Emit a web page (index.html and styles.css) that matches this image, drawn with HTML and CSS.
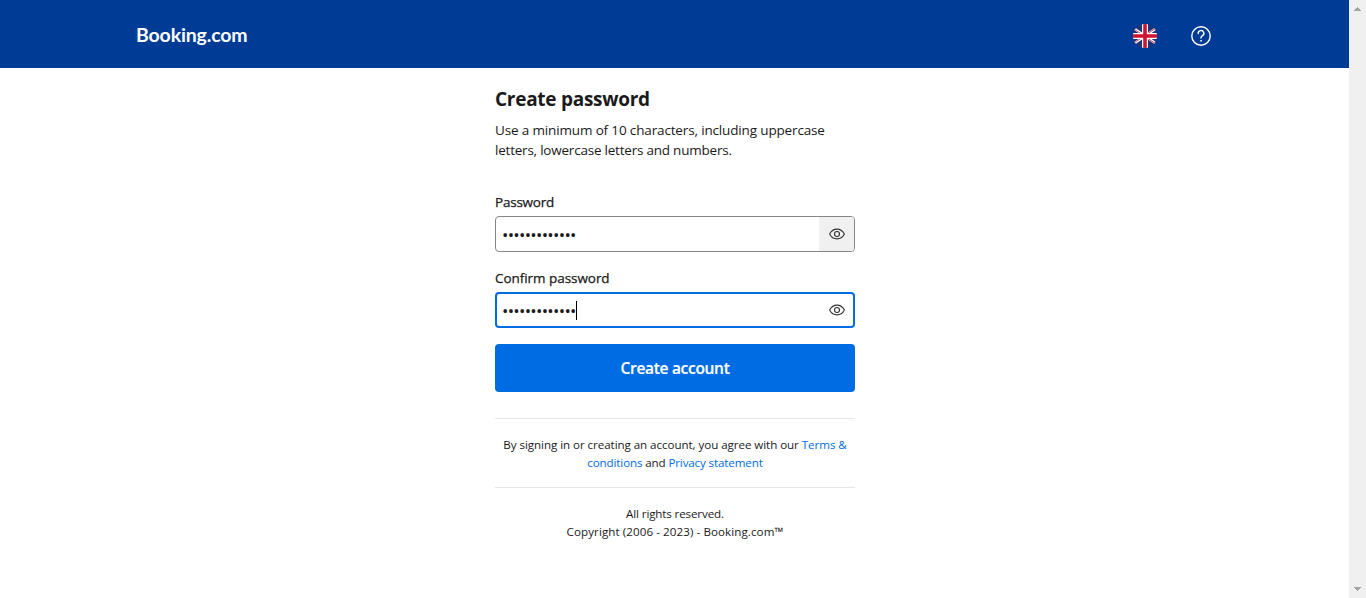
FILE: index.html
```html
<!DOCTYPE html>
<html lang="en">
<head>
<meta charset="utf-8">
<title>Create password</title>
<link rel="stylesheet" href="styles.css">
</head>
<body>
<div class="window">
  <div class="page">
    <header class="header">
      <a class="logo"><span class="logo-text">Booking.com</span></a>
      <div class="header-actions">
        <svg class="flag" width="24" height="24" viewBox="0 0 24 24">
          <clipPath id="disc"><circle cx="12" cy="12" r="12"/></clipPath>
          <g clip-path="url(#disc)">
            <path fill="#1d3478" d="M0 0h24v24H0z"/>
            <path stroke="#fff" stroke-width="2.500" d="M-2 2.500l28 19M26 2.500L-2 21.500"/>
            <path stroke="#d0132f" stroke-width=".8" d="M-2 3l28 19M26 2L-2 21"/>
            <path stroke="#fff" stroke-width="6" d="M12 0v24M0 12h24"/>
            <path stroke="#d0132f" stroke-width="3.6" d="M12 0v24M0 12h24"/>
          </g>
        </svg>
        <svg class="help" width="20" height="20" viewBox="0 0 20 20" fill="none" stroke="#fff" stroke-width="1.4" stroke-linecap="round">
          <circle cx="10" cy="10" r="9.2"/>
          <path d="M7.200 7.500a2.800 2.800 0 1 1 4.300 2.200c-.9.600-1.500 1-1.500 2v.4"/>
          <circle cx="10" cy="14.800" r=".5" fill="#fff" stroke-width=".8"/>
        </svg>
      </div>
    </header>
    <main class="panel">
      <h1 class="title"><span class="title-text">Create password</span></h1>
      <p class="intro"><span class="intro-a">Use a minimum of 10 characters, including uppercase</span><br><span class="intro-b">letters, lowercase letters and numbers.</span></p>
      <div class="label"><span class="label-a">Password</span></div>
      <div class="field">
        <span class="dots">•••••••••••••</span>
        <span class="reveal reveal-gray">
          <svg width="16" height="12" viewBox="0 0 16 12" fill="none" stroke="#333" stroke-width="1.1"><path d="M.6 6C2.2 3 4.9 1.1 8 1.1S13.800 3 15.400 6C13.800 9 11.100 10.900 8 10.900S2.200 9 .6 6z"/><circle cx="8" cy="6" r="2.5"/></svg>
        </span>
      </div>
      <div class="label label-second"><span class="label-b">Confirm password</span></div>
      <div class="field field-focus">
        <span class="dots">•••••••••••••</span><span class="caret"></span>
        <span class="reveal">
          <svg width="16" height="12" viewBox="0 0 16 12" fill="none" stroke="#333" stroke-width="1.1"><path d="M.6 6C2.2 3 4.9 1.1 8 1.1S13.800 3 15.400 6C13.800 9 11.100 10.900 8 10.900S2.200 9 .6 6z"/><circle cx="8" cy="6" r="2.5"/></svg>
        </span>
      </div>
      <button class="submit"><span class="submit-text">Create account</span></button>
      <div class="terms"><span class="terms-a">By signing in or creating an account, you agree with our <a>Terms &amp;</a></span><br><span class="terms-b"><a>conditions</a> and <a>Privacy statement</a></span></div>
      <footer class="footer"><span class="foot-a">All rights reserved.</span><br><span class="foot-b">Copyright (2006 - 2023) - Booking.com™</span></footer>
    </main>
  </div>
  <div class="scrollbar">
    <svg width="7" height="4" viewBox="0 0 7 4" fill="#a3a3a3" shape-rendering="crispEdges"><path d="M3 0h1v1h1v1h1v1h1v1H0V3h1V2h1V1h1z"/></svg>
    <svg width="7" height="4" viewBox="0 0 7 4" fill="#a3a3a3" shape-rendering="crispEdges"><path d="M3 4h1V3h1V2h1V1h1V0H0v1h1v1h1v1h1z"/></svg>
  </div>
</div>
</body>
</html>
```
FILE: styles.css
```css
* { box-sizing: border-box; }
body { margin: 0; background: #fff; color: #1a1a1a; font-family: "Open Sans", "Noto Sans", sans-serif; overflow: hidden; }
span { white-space: nowrap; }
.window { display: flex; height: 598px; }
.page { flex: 1; }
.scrollbar { width: 17px; height: 598px; background: #f0f0f0; display: flex; flex-direction: column; justify-content: space-between; align-items: center; padding: 7px 0; }
.header { height: 68px; background: #003b95; display: flex; justify-content: space-between; align-items: center; padding: 4px 138px 0 136px; }
.logo { color: #fff; font: 700 19.5px/24px Lato, sans-serif; letter-spacing: -.15px; padding-bottom: 3px; }
.header-actions { display: flex; align-items: center; gap: 34px; }
.flag, .help { display: block; }
.panel { width: 360px; margin: 0 auto; padding-top: 17px; position: relative; left: .5px; }
.title { margin: 0; font-size: 19px; line-height: 28px; font-weight: 700; letter-spacing: -.27px; }
.intro { margin: 7px 0 0; font-size: 13.5px; line-height: 20px; }
.intro-a { letter-spacing: -.15px; }
.intro-b { letter-spacing: -.22px; }
.label { margin-top: 32px; font-size: 13.5px; line-height: 20px; -webkit-text-stroke: .25px #1a1a1a; }
.label-a { letter-spacing: -.22px; }
.label-b { letter-spacing: -.05px; }
.label-second { margin-top: 16px; }
.field { height: 36px; margin-top: 4px; border: 1px solid #868686; border-radius: 4px; display: flex; align-items: center; padding-left: 6px; overflow: hidden; }
.field-focus { border: 2px solid #006ce4; padding-left: 5px; }
.dots { font-size: 17px; line-height: 20px; letter-spacing: -.72px; padding-top: 2px; }
.caret { width: 1px; height: 19px; background: #000; }
.reveal { margin-left: auto; width: 35px; height: 34px; display: flex; align-items: center; justify-content: center; }
.field-focus .reveal { width: 33px; }
.reveal-gray { background: #f0f0f0; }
.submit { display: block; width: 360px; height: 48px; margin-top: 16px; border: 0; border-radius: 4px; background: #006ce4; color: #fff; font: 600 15.5px/24px "Open Sans", sans-serif; letter-spacing: -.3px; -webkit-text-stroke: .2px #fff; padding-top: 1px; }
.terms { margin-top: 26px; border: solid #e7e7e7; border-width: 1px 0; height: 70px; padding-top: 17px; text-align: center; font-size: 11.6px; line-height: 18px; }
.terms-a { letter-spacing: -.06px; }
.terms-b { letter-spacing: -.13px; }
.terms a { color: #006ce4; }
.footer { margin-top: 17px; text-align: center; font-size: 11.6px; line-height: 18px; }
.foot-a { letter-spacing: -.13px; }
.foot-b { letter-spacing: .08px; }
```
